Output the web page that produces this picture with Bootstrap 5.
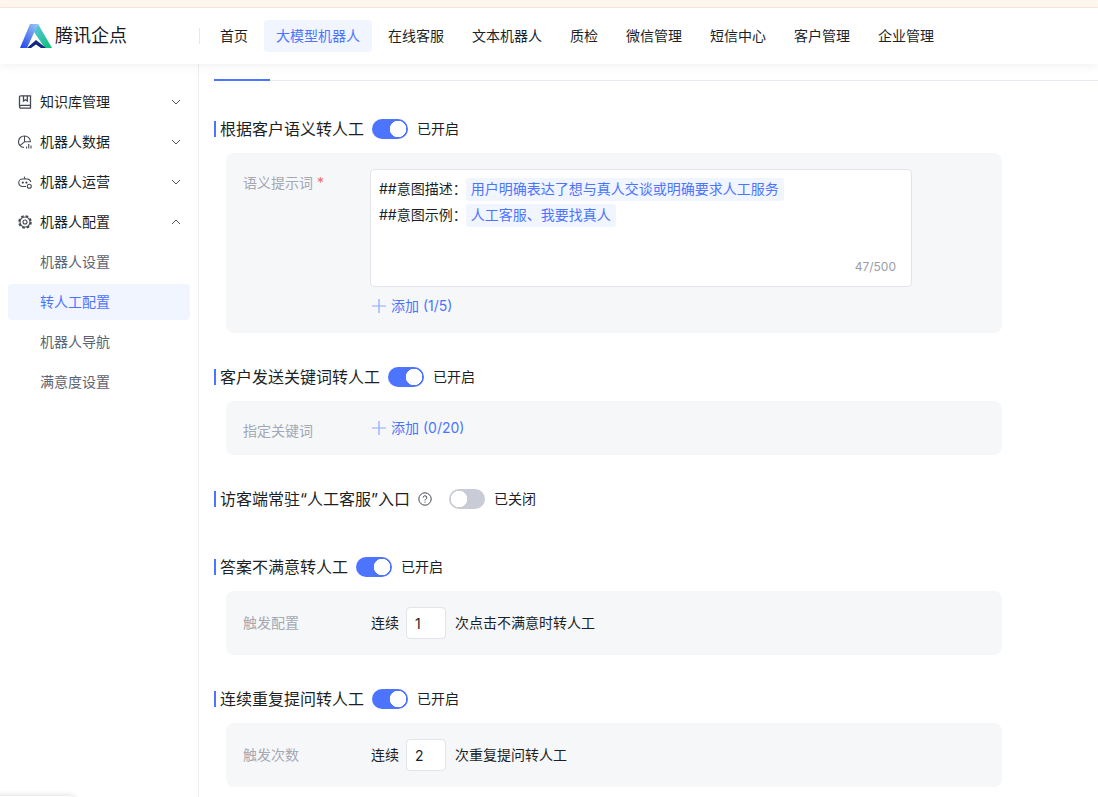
<!DOCTYPE html>
<html lang="zh">
<head>
  <meta charset="UTF-8">
  <title>腾讯企点</title>
  <link href="https://cdn.jsdelivr.net/npm/bootstrap@5.3.0/dist/css/bootstrap.min.css" rel="stylesheet">
  <style>
    html, body {
      height: 100%;
      overflow: hidden;
    }
    body {
      font-family: "Inter", "Noto Sans CJK SC", sans-serif;
      font-size: 14px;
      line-height: 20px;
      color: #1c1f26;
      background: #fff;
    }
    .notice-strip {
      height: 8px;
      background: #fff6ee;
      border-bottom: 1px solid #f8e9dc;
    }
    /* Header */
    .top-bar {
      height: 56px;
      padding-left: 20px;
      background: #fff;
      box-shadow: 0 2px 10px rgba(0, 0, 0, .06);
      position: relative;
      z-index: 2;
    }
    .logo-mark { width: 32px; height: 24px; }
    .logo-name {
      width: 144px;
      margin-left: 3px;
      font-size: 18px;
      line-height: 24px;
      color: #17191f;
    }
    .top-sep {
      width: 1px;
      height: 16px;
      background: #e6e8ed;
    }
    .top-nav { margin-left: 8px; gap: 4px; }
    .top-nav .nav-link {
      height: 32px;
      padding: 0 12px;
      line-height: 32px;
      color: #1c1f26;
      border-radius: 4px;
    }
    .top-nav .nav-link.active {
      color: #4d74ff;
      background: #f1f5ff;
    }
    /* Sidebar */
    .app-body { height: 733px; }
    .side-menu {
      flex: 0 0 199px;
      padding: 18px 8px 0;
      border-right: 1px solid #eceef2;
    }
    .side-item {
      height: 40px;
      padding: 0 8px 0 10px;
      color: #1c1f26;
      font-size: 14px;
      text-decoration: none;
    }
    .side-item svg.menu-icon { width: 14px; height: 14px; margin-right: 8px; flex: none; }
    .side-item svg.menu-arrow { width: 10px; height: 10px; margin-left: auto; margin-right: 1px; }
    .side-sub {
      padding-left: 32px;
      color: #5d6370;
    }
    .side-holder { height: 40px; }
    .side-sub.current {
      height: 36px;
      color: #4d74ff;
      background: #f1f5ff;
      border-radius: 4px;
    }
    /* Main */
    .main-pane { flex: 1; min-width: 0; padding-left: 15px; }
    .tab-rule {
      height: 17px;
      border-bottom: 1px solid #e9ebf0;
      position: relative;
    }
    .tab-rule::after {
      content: "";
      position: absolute;
      left: 0;
      bottom: -1px;
      width: 56px;
      height: 2px;
      background: #4d74ff;
    }
    .rule-list { padding-top: 38px; }
    .rule-block { padding-bottom: 34px; }
    .rule-title {
      height: 20px;
      margin-bottom: 14px;
    }
    .rule-name {
      padding-left: 4px;
      margin-right: 8px;
      font-size: 16px;
      line-height: 16px;
      white-space: nowrap;
      border-left: 2px solid #4d74ff;
    }
    .help-mark { width: 14px; height: 14px; margin: 0 17px 0 0; }
    .form-switch.rule-switch {
      min-height: 0;
      margin: 0 9px 0 0;
      padding: 0;
      line-height: 20px;
      height: 20px;
    }
    .form-switch.rule-switch .form-check-input {
      display: block;
      float: none;
      width: 36px;
      height: 20px;
      margin: 0;
      border: 0;
      border-radius: 10px;
      background-color: #c9ccd6;
      background-image: radial-gradient(circle at center, #fff 8px, transparent 8.5px);
      background-size: 20px 20px;
      background-repeat: no-repeat;
      box-shadow: none;
    }
    .form-switch.rule-switch .form-check-input:checked {
      background-color: #4d74ff;
      background-position: right center;
    }
    .rule-panel {
      width: 776px;
      margin-left: 12px;
      padding: 16px 0 16px 17px;
      background: #f6f7f9;
      border-radius: 8px;
    }
    .rule-panel.slim-panel { height: 54px; }
    .rule-label {
      flex: 0 0 127px;
      color: #a4a8b3;
    }
    .rule-label i { color: #f26a6a; font-style: normal; }
    .prompt-box {
      position: relative;
      width: 542px;
      height: 118px;
      padding: 8px 8px;
      background: #fff;
      border: 1px solid #e2e4ea;
      border-radius: 4px;
    }
    .prompt-line { height: 26px; line-height: 20px; color: #1c1f26; white-space: nowrap; }
    .prompt-tag {
      display: inline-block;
      height: 23px;
      margin-left: -1px;
      padding: 1px 5px 0;
      color: #4d74ff;
      background: #f1f5ff;
      border-radius: 3px;
    }
    .prompt-count {
      position: absolute;
      right: 15px;
      bottom: 9px;
      font-size: 12px;
      color: #9a9ea9;
    }
    .add-link {
      height: 20px;
      margin-left: 2px;
      padding: 0;
      border: 0;
      background: none;
      font-size: 14px;
      color: #4d74ff;
    }
    .add-link svg { width: 14px; height: 14px; margin-right: 5px; }
    .add-under { margin-top: 9px; margin-bottom: 1px; }
    .add-slim { margin-top: 1px; }
    .times-input.form-control {
      width: 40px;
      height: 32px;
      margin: 0 9px 0 7px;
      padding: 0 0 0 8px;
      font-size: 14px;
      color: #1c1f26;
      border-color: #e2e4ea;
      border-radius: 4px;
    }
    .times-text { margin-left: 1px; }
    .corner-shadow {
      position: fixed;
      left: -10px;
      top: 796px;
      width: 85px;
      height: 10px;
      border-radius: 6px;
      background: #fff;
      box-shadow: 0 0 6px rgba(0, 0, 0, .16);
    }
  </style>
</head>
<body>
  <div class="notice-strip"></div>

  <!-- Header -->
  <header class="top-bar d-flex align-items-center">
    <svg class="logo-mark" viewBox="0 0 32 24">
      <defs>
        <linearGradient id="legBlue" x1=".8" y1="0" x2=".1" y2="1">
          <stop offset="0" stop-color="#93bcf6"/>
          <stop offset="1" stop-color="#2348ea"/>
        </linearGradient>
        <linearGradient id="legGreen" x1=".2" y1="0" x2=".8" y2="1">
          <stop offset="0" stop-color="#5cc4e0"/>
          <stop offset="1" stop-color="#0cc27c"/>
        </linearGradient>
      </defs>
      <path d="M10 0H18L7 24H0Z" fill="url(#legBlue)"/>
      <path d="M18 0L32 24H25L14 8Z" fill="url(#legGreen)"/>
      <path d="M7 24L16 16L26 24H21L16 20.5L11 24Z" fill="#13277c"/>
    </svg>
    <div class="logo-name">腾讯企点</div>
    <div class="top-sep"></div>
    <nav class="nav top-nav">
      <a class="nav-link" href="#">首页</a>
      <a class="nav-link active" href="#">大模型机器人</a>
      <a class="nav-link" href="#">在线客服</a>
      <a class="nav-link" href="#">文本机器人</a>
      <a class="nav-link" href="#">质检</a>
      <a class="nav-link" href="#">微信管理</a>
      <a class="nav-link" href="#">短信中心</a>
      <a class="nav-link" href="#">客户管理</a>
      <a class="nav-link" href="#">企业管理</a>
    </nav>
  </header>

  <div class="app-body d-flex">
    <!-- Sidebar -->
    <aside class="side-menu">
      <a class="side-item d-flex align-items-center" href="#">
        <svg class="menu-icon" viewBox="0 0 14 14" fill="none" stroke="#444954" stroke-width="1.3"><path d="M1.5 11V1.8C1.5 1.2 2 .8 2.6 .8H12.5V13.2H3C2.2 13.2 1.5 12.6 1.5 11.8S2.2 10.4 3 10.4H12.5"/><path d="M5.5 .8V6L7.4 4.8L9.3 6V.8"/></svg>
        知识库管理
        <svg class="menu-arrow" viewBox="0 0 10 10" fill="none" stroke="#555a66" stroke-width="1"><path d="M1 3L5 7L9 3"/></svg>
      </a>
      <a class="side-item d-flex align-items-center" href="#">
        <svg class="menu-icon" viewBox="0 0 14 14" fill="none" stroke="#444954" stroke-width="1.1"><path d="M6 12.5A5.7 5.7 0 0 1 6.5 1"/><path d="M6.5 1A5.7 5.7 0 0 1 12.4 6.8H6.5V1M6.5 6.8L2.2 10.4"/><path d="M8.5 13.5V11.5M10.7 13.5V9M13 13.5V10.5"/></svg>
        机器人数据
        <svg class="menu-arrow" viewBox="0 0 10 10" fill="none" stroke="#555a66" stroke-width="1"><path d="M1 3L5 7L9 3"/></svg>
      </a>
      <a class="side-item d-flex align-items-center" href="#">
        <svg class="menu-icon" viewBox="0 0 14 14" fill="none" stroke="#444954" stroke-width="1.1"><path d="M8 11.5H4.5A3.7 3.7 0 0 1 4.5 4H9.2A3.7 3.7 0 0 1 12.8 7"/><path d="M6.8 4L6.3 1.6"/><circle cx="4.8" cy="7.6" r=".6"/><circle cx="8.4" cy="7.6" r=".6"/><circle cx="11.3" cy="11.2" r="2"/></svg>
        机器人运营
        <svg class="menu-arrow" viewBox="0 0 10 10" fill="none" stroke="#555a66" stroke-width="1"><path d="M1 3L5 7L9 3"/></svg>
      </a>
      <a class="side-item d-flex align-items-center" href="#">
        <svg class="menu-icon" viewBox="0 0 14 14" fill="none" stroke="#444954" stroke-width="1.1"><circle cx="7" cy="7" r="5"/><circle cx="7" cy="7" r="5.9" stroke-width="1.8" stroke-dasharray="2.6 2.03"/><circle cx="7" cy="7" r="2"/></svg>
        机器人配置
        <svg class="menu-arrow" viewBox="0 0 10 10" fill="none" stroke="#555a66" stroke-width="1"><path d="M1 7L5 3L9 7"/></svg>
      </a>
      <a class="side-item side-sub d-flex align-items-center" href="#">机器人设置</a>
      <div class="side-holder d-flex align-items-center">
        <a class="side-item side-sub current d-flex align-items-center w-100" href="#">转人工配置</a>
      </div>
      <a class="side-item side-sub d-flex align-items-center" href="#">机器人导航</a>
      <a class="side-item side-sub d-flex align-items-center" href="#">满意度设置</a>
    </aside>

    <!-- Main -->
    <main class="main-pane">
      <div class="tab-rule"></div>
      <div class="rule-list">

        <section class="rule-block">
          <div class="rule-title d-flex align-items-center">
            <span class="rule-name">根据客户语义转人工</span>
            <div class="form-check form-switch rule-switch"><input class="form-check-input" type="checkbox" checked></div>
            <span>已开启</span>
          </div>
          <div class="rule-panel d-flex">
            <div class="rule-label pt-1">语义提示词 <i>*</i></div>
            <div>
              <div class="prompt-box">
                <div class="prompt-line">##意图描述：<span class="prompt-tag">用户明确表达了想与真人交谈或明确要求人工服务</span></div>
                <div class="prompt-line">##意图示例：<span class="prompt-tag">人工客服、我要找真人</span></div>
                <span class="prompt-count">47/500</span>
              </div>
              <button class="add-link add-under d-flex align-items-center" type="button">
                <svg viewBox="0 0 14 14" fill="none" stroke="#8ea7fb" stroke-width="1.2"><path d="M7 0V14M0 7H14"/></svg>添加 (1/5)
              </button>
            </div>
          </div>
        </section>

        <section class="rule-block">
          <div class="rule-title d-flex align-items-center">
            <span class="rule-name">客户发送关键词转人工</span>
            <div class="form-check form-switch rule-switch"><input class="form-check-input" type="checkbox" checked></div>
            <span>已开启</span>
          </div>
          <div class="rule-panel slim-panel d-flex">
            <div class="rule-label pt-1">指定关键词</div>
            <button class="add-link add-slim d-flex align-items-center" type="button">
              <svg viewBox="0 0 14 14" fill="none" stroke="#8ea7fb" stroke-width="1.2"><path d="M7 0V14M0 7H14"/></svg>添加 (0/20)
            </button>
          </div>
        </section>

        <section class="rule-block">
          <div class="rule-title d-flex align-items-center">
            <span class="rule-name">访客端常驻“人工客服”入口</span>
            <svg class="help-mark" viewBox="0 0 14 14" fill="none" stroke="#444954" stroke-width="1"><circle cx="7" cy="7" r="6.2"/><path d="M5.2 5.6A1.8 1.8 0 1 1 7.8 7.2C7.2 7.5 7 7.9 7 8.5"/><path d="M7 9.7V10.7"/></svg>
            <div class="form-check form-switch rule-switch"><input class="form-check-input" type="checkbox"></div>
            <span>已关闭</span>
          </div>
        </section>

        <section class="rule-block">
          <div class="rule-title d-flex align-items-center">
            <span class="rule-name">答案不满意转人工</span>
            <div class="form-check form-switch rule-switch"><input class="form-check-input" type="checkbox" checked></div>
            <span>已开启</span>
          </div>
          <div class="rule-panel d-flex align-items-center">
            <div class="rule-label">触发配置</div>
            <span class="times-text">连续</span>
            <input class="form-control times-input" type="text" value="1">
            <span>次点击不满意时转人工</span>
          </div>
        </section>

        <section class="rule-block">
          <div class="rule-title d-flex align-items-center">
            <span class="rule-name">连续重复提问转人工</span>
            <div class="form-check form-switch rule-switch"><input class="form-check-input" type="checkbox" checked></div>
            <span>已开启</span>
          </div>
          <div class="rule-panel d-flex align-items-center">
            <div class="rule-label">触发次数</div>
            <span class="times-text">连续</span>
            <input class="form-control times-input" type="text" value="2">
            <span>次重复提问转人工</span>
          </div>
        </section>

      </div>
    </main>
  </div>
  <div class="corner-shadow"></div>

  <script src="https://cdn.jsdelivr.net/npm/bootstrap@5.3.0/dist/js/bootstrap.bundle.min.js"></script>
</body>
</html>
